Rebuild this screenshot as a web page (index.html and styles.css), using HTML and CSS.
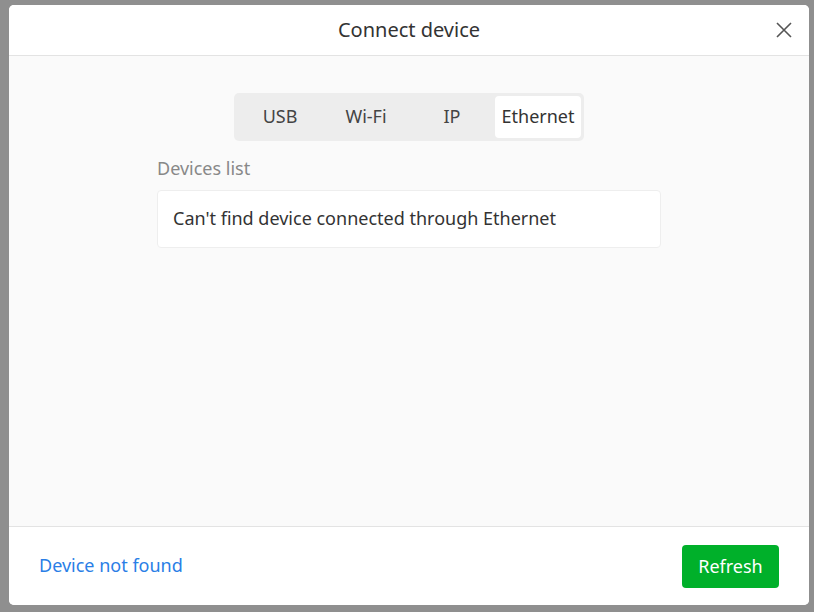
FILE: index.html
```html
<!DOCTYPE html>
<html lang="en">

<head>
    <meta charset="UTF-8">
    <meta name="viewport" content="width=device-width, initial-scale=1.0">
    <title>Connect device</title>
    <link rel="stylesheet" href="styles.css">
</head>

<body>
    <div class="backdrop">
        <div class="modal">
            <div class="modal-header">
                <h2>Connect device</h2>
                <button class="close-btn" aria-label="Close">
                    <svg width="18" height="18" viewBox="0 0 18 18">
                        <path d="M2 2 L16 16 M16 2 L2 16" stroke="#555" stroke-width="1.6" fill="none" />
                    </svg>
                </button>
            </div>

            <div class="modal-body">
                <div class="tabs">
                    <div class="tab">USB</div>
                    <div class="tab">Wi-Fi</div>
                    <div class="tab">IP</div>
                    <div class="tab active">Ethernet</div>
                </div>

                <div class="devices">
                    <div class="devices-label">Devices list</div>
                    <div class="devices-box">Can't find device connected through Ethernet</div>
                </div>
            </div>

            <div class="modal-footer">
                <a class="not-found" href="#">Device not found</a>
                <button class="refresh-btn">Refresh</button>
            </div>
        </div>
    </div>
</body>

</html>
```

FILE: styles.css
```css
html,
body {
    margin: 0;
    padding: 0;
    height: 100%;
}

body {
    font-family: "Noto Sans", "Open Sans", sans-serif;
    background-color: #8f8f8f;
    color: #333;
}

.backdrop {
    height: 100%;
    padding: 5px 5px 7px 9px;
    box-sizing: border-box;
    display: flex;
    align-items: flex-start;
}

.modal {
    width: 800px;
    height: 600px;
    background-color: #fafafa;
    border-radius: 5px;
    overflow: hidden;
    display: flex;
    flex-direction: column;
}

.modal-header {
    height: 50px;
    background-color: #fff;
    border-bottom: 1px solid #e3e3e3;
    display: flex;
    align-items: center;
    justify-content: center;
    position: relative;
    flex-shrink: 0;
}

.modal-header h2 {
    margin: 0 0 2px;
    font-size: 20px;
    font-weight: 400;
    color: #333;
}

.close-btn {
    position: absolute;
    right: 16px;
    top: 16px;
    border: none;
    background: none;
    padding: 0;
    width: 18px;
    height: 18px;
    cursor: pointer;
}

.close-btn svg {
    display: block;
}

.modal-body {
    flex: 1;
    display: flex;
    flex-direction: column;
    align-items: center;
    padding-top: 37px;
}

.tabs {
    display: flex;
    background-color: #ededed;
    border-radius: 5px;
    padding: 3px;
}

.tab {
    width: 86px;
    height: 42px;
    line-height: 40px;
    text-align: center;
    font-size: 18px;
    color: #444;
    border-radius: 4px;
    cursor: pointer;
}

.tab.active {
    background-color: #fff;
    color: #333;
}

.devices {
    width: 504px;
    margin-top: 14px;
}

.devices-label {
    font-size: 18px;
    color: #888;
    line-height: 26px;
    margin-bottom: 9px;
}

.devices-box {
    background-color: #fff;
    border: 1px solid #eeeeee;
    border-radius: 4px;
    height: 56px;
    line-height: 54px;
    padding: 0 15px;
    font-size: 18px;
    color: #333;
}

.modal-footer {
    height: 78px;
    background-color: #fff;
    border-top: 1px solid #e3e3e3;
    display: flex;
    align-items: center;
    justify-content: space-between;
    padding: 0 30px;
    flex-shrink: 0;
}

.not-found {
    font-size: 18px;
    color: #2a7ee6;
    text-decoration: none;
    margin-top: -2px;
}

.refresh-btn {
    width: 97px;
    height: 43px;
    border: none;
    border-radius: 4px;
    background-color: #00b02a;
    color: #fff;
    font-family: inherit;
    font-size: 18px;
    padding-bottom: 2px;
    cursor: pointer;
}
```
